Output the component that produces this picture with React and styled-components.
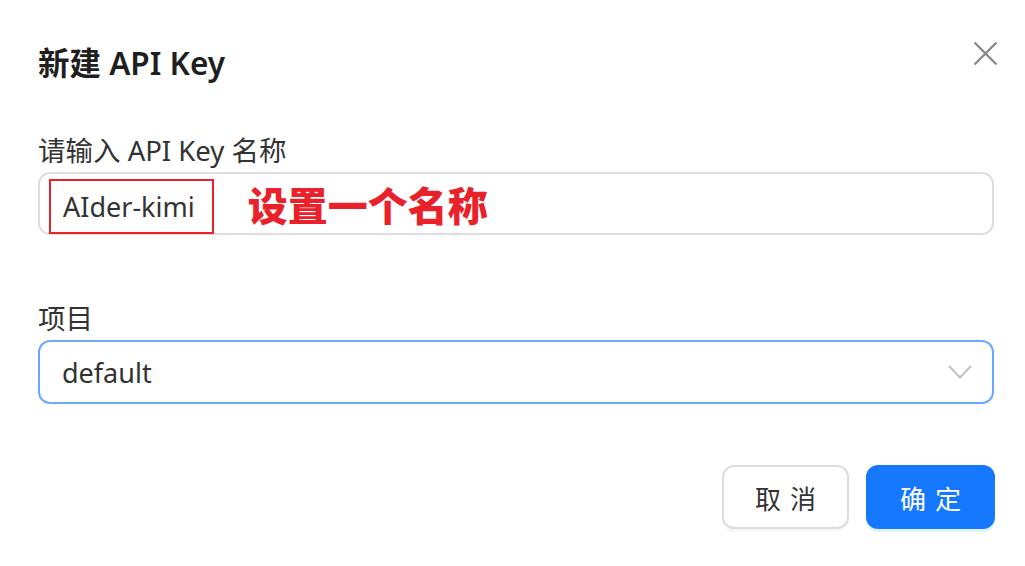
import React from "react";
import styled, { createGlobalStyle } from "styled-components";

const Global = createGlobalStyle`
  html, body { margin: 0; padding: 0; background: #ffffff; }
  body { font-family: "Noto Sans", "Noto Sans CJK SC", sans-serif; }
`;

const Dialog = styled.div`
  box-sizing: border-box;
  width: 1025px;
  height: 566px;
  padding: 41px 31px 0 38px;
  background: #ffffff;
  display: flex;
  flex-direction: column;
`;

const Header = styled.div`
  display: flex;
  align-items: flex-start;
  justify-content: space-between;
`;

const Title = styled.h2`
  margin: 0;
  font-size: 31.5px;
  line-height: 44px;
  font-weight: 600;
  color: #1f1f1f;
`;

const CloseButton = styled.button`
  width: 25px;
  height: 25px;
  margin: 0 -4px 0 0;
  padding: 0;
  border: none;
  background: transparent;
  color: #8a8a8a;
  display: flex;
  cursor: pointer;
`;

const Label = styled.label`
  display: block;
  margin-top: ${(p) => p.$gap}px;
  font-size: 27.5px;
  line-height: 40px;
  color: #333333;
`;

const Field = styled.div`
  box-sizing: border-box;
  margin-top: 1px;
  height: ${(p) => (p.$active ? 64 : 63)}px;
  border: 2px solid ${(p) => (p.$active ? "#69a9ff" : "#dedede")};
  border-radius: 12px;
  display: flex;
  align-items: center;
  padding: 0 ${(p) => (p.$active ? "20px" : "0")} 0 ${(p) => (p.$active ? "22px" : "9px")};
  font-size: 27px;
  color: #333333;
`;

const Marked = styled.span`
  box-sizing: border-box;
  height: 55px;
  margin-top: 6px;
  padding: 0 17px 0 12px;
  border: 2px solid #e8212b;
  display: inline-flex;
  align-items: center;
`;

const Note = styled.span`
  margin-left: 34px;
  font-family: "Noto Sans CJK SC", sans-serif;
  font-size: 40px;
  font-weight: 900;
  color: #e8212b;
`;

const Value = styled.span`
  flex: 1;
`;

const Footer = styled.div`
  margin-top: 61px;
  display: flex;
  justify-content: flex-end;
  gap: 17px;
  margin-right: -1px;
`;

const Button = styled.button`
  box-sizing: border-box;
  width: ${(p) => (p.$primary ? 129 : 127)}px;
  height: 64px;
  border-radius: 12px;
  border: 2px solid ${(p) => (p.$primary ? "#1677ff" : "#dddddd")};
  background: ${(p) => (p.$primary ? "#1677ff" : "#ffffff")};
  color: ${(p) => (p.$primary ? "#ffffff" : "#333333")};
  box-shadow: ${(p) =>
    p.$primary ? "0 3px 0 rgba(5,145,255,0.12)" : "0 3px 0 rgba(0,0,0,0.03)"};
  font-family: "Noto Sans CJK SC", sans-serif;
  font-size: 26px;
  letter-spacing: 9px;
  text-indent: 9px;
  padding: 0;
  cursor: pointer;
`;

export default function App() {
  return (
    <>
      <Global />
      <Dialog>
        <Header>
          <Title>新建 API Key</Title>
          <CloseButton aria-label="close">
            <svg width="25" height="25" viewBox="0 0 25 25">
              <path d="M1.5 1.5 L23.5 23.5 M23.5 1.5 L1.5 23.5" stroke="currentColor" strokeWidth="2.4" fill="none" />
            </svg>
          </CloseButton>
        </Header>

        <Label $gap={46}>请输入 API Key 名称</Label>
        <Field>
          <Marked>AIder-kimi</Marked>
          <Note>设置一个名称</Note>
        </Field>

        <Label $gap={64}>项目</Label>
        <Field $active>
          <Value>default</Value>
          <svg width="24" height="14" viewBox="0 0 24 14">
            <path d="M1 1 L12 12.5 L23 1" stroke="#c2c2c2" strokeWidth="2" fill="none" />
          </svg>
        </Field>

        <Footer>
          <Button>取消</Button>
          <Button $primary>确定</Button>
        </Footer>
      </Dialog>
    </>
  );
}
